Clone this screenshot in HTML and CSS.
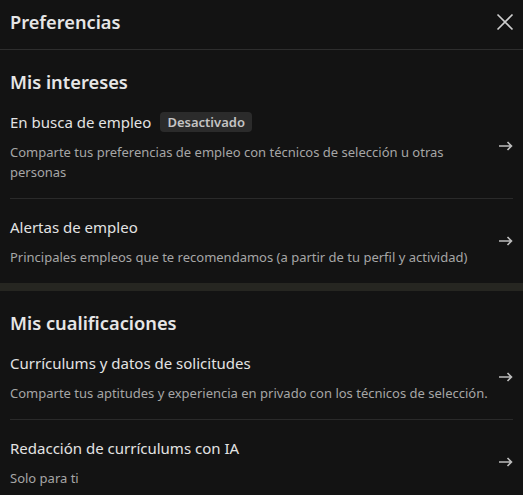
FILE: index.html
```html
<!DOCTYPE html>
<html lang="es">
<head>
<meta charset="utf-8">
<title>Preferencias</title>
<link rel="stylesheet" href="styles.css">
</head>
<body>
<div class="panel">
  <header class="head">
    <h1 class="head-title">Preferencias</h1>
    <button class="close" aria-label="Cerrar">
      <svg width="18" height="18" viewBox="0 0 18 18"><path d="M1.5 1.5 L16.5 16.5 M16.5 1.5 L1.5 16.5" stroke="currentColor" stroke-width="1.6" fill="none"/></svg>
    </button>
  </header>

  <section class="section">
    <h2 class="section-title">Mis intereses</h2>
    <a class="item" href="#">
      <div class="item-text">
        <div class="item-title">En busca de empleo <span class="badge">Desactivado</span></div>
        <p class="item-desc">Comparte tus preferencias de empleo con técnicos de selección u otras personas</p>
      </div>
      <svg class="arrow" width="14" height="10" viewBox="0 0 14 10"><path d="M0 5 H12.5 M8.5 1 L12.5 5 L8.5 9" stroke="currentColor" stroke-width="1.6" fill="none"/></svg>
    </a>
    <a class="item" href="#">
      <div class="item-text">
        <div class="item-title">Alertas de empleo</div>
        <p class="item-desc">Principales empleos que te recomendamos (a partir de tu perfil y actividad)</p>
      </div>
      <svg class="arrow" width="14" height="10" viewBox="0 0 14 10"><path d="M0 5 H12.5 M8.5 1 L12.5 5 L8.5 9" stroke="currentColor" stroke-width="1.6" fill="none"/></svg>
    </a>
  </section>

  <div class="sep"></div>

  <section class="section">
    <h2 class="section-title">Mis cualificaciones</h2>
    <a class="item" href="#">
      <div class="item-text">
        <div class="item-title">Currículums y datos de solicitudes</div>
        <p class="item-desc">Comparte tus aptitudes y experiencia en privado con los técnicos de selección.</p>
      </div>
      <svg class="arrow" width="14" height="10" viewBox="0 0 14 10"><path d="M0 5 H12.5 M8.5 1 L12.5 5 L8.5 9" stroke="currentColor" stroke-width="1.6" fill="none"/></svg>
    </a>
    <a class="item" href="#">
      <div class="item-text">
        <div class="item-title">Redacción de currículums con IA</div>
        <p class="item-desc">Solo para ti</p>
      </div>
      <svg class="arrow" width="14" height="10" viewBox="0 0 14 10"><path d="M0 5 H12.5 M8.5 1 L12.5 5 L8.5 9" stroke="currentColor" stroke-width="1.6" fill="none"/></svg>
    </a>
  </section>
</div>
</body>
</html>
```

FILE: styles.css
```css
html, body {
  margin: 0;
  padding: 0;
  background: #131313;
}
body {
  font-family: "Noto Sans", "Open Sans", sans-serif;
  color: #e3e3e3;
  width: 523px;
  height: 495px;
  overflow: hidden;
}
.panel {
  display: flex;
  flex-direction: column;
}
.head {
  box-sizing: content-box;
  height: 43px;
  padding: 0 9px 6px 10px;
  border-bottom: 1px solid #2e2e2e;
  display: flex;
  align-items: center;
  justify-content: space-between;
}
.head-title {
  margin: 0;
  font-size: 18.2px;
  font-weight: 600;
  line-height: 28px;
  color: #e6e6e6;
}
.close {
  background: none;
  border: 0;
  padding: 0;
  width: 18px;
  height: 18px;
  color: #cfcfcf;
  display: flex;
}
.section {
  padding: 18px 10px 0 10px;
}
.section-title {
  margin: 0;
  font-size: 18.3px;
  font-weight: 600;
  line-height: 28px;
  color: #e6e6e6;
}
.item {
  display: flex;
  align-items: center;
  gap: 4px;
  padding: 16px 0;
  text-decoration: none;
  color: inherit;
  border-bottom: 1px solid #2a2a2a;
}
.section .item:first-of-type {
  padding-top: 14px;
}
.section .item:last-child {
  border-bottom: 0;
}
.item-text {
  flex: 1;
  display: flex;
  flex-direction: column;
  gap: 8px;
}
.item-title {
  font-size: 15px;
  line-height: 24px;
  color: #e3e3e3;
  display: flex;
  align-items: center;
  gap: 9px;
}
.badge {
  font-size: 13px;
  font-weight: 600;
  line-height: 20px;
  padding: 0 7px;
  background: #2b2b2b;
  color: #c4c4c4;
  border-radius: 4px;
}
.item-desc {
  margin: 0;
  font-size: 13px;
  line-height: 20px;
  color: #a6a6a6;
}
.arrow {
  flex: none;
  color: #bdbdbd;
}
.sep {
  height: 8px;
  background: #262621;
}
```
